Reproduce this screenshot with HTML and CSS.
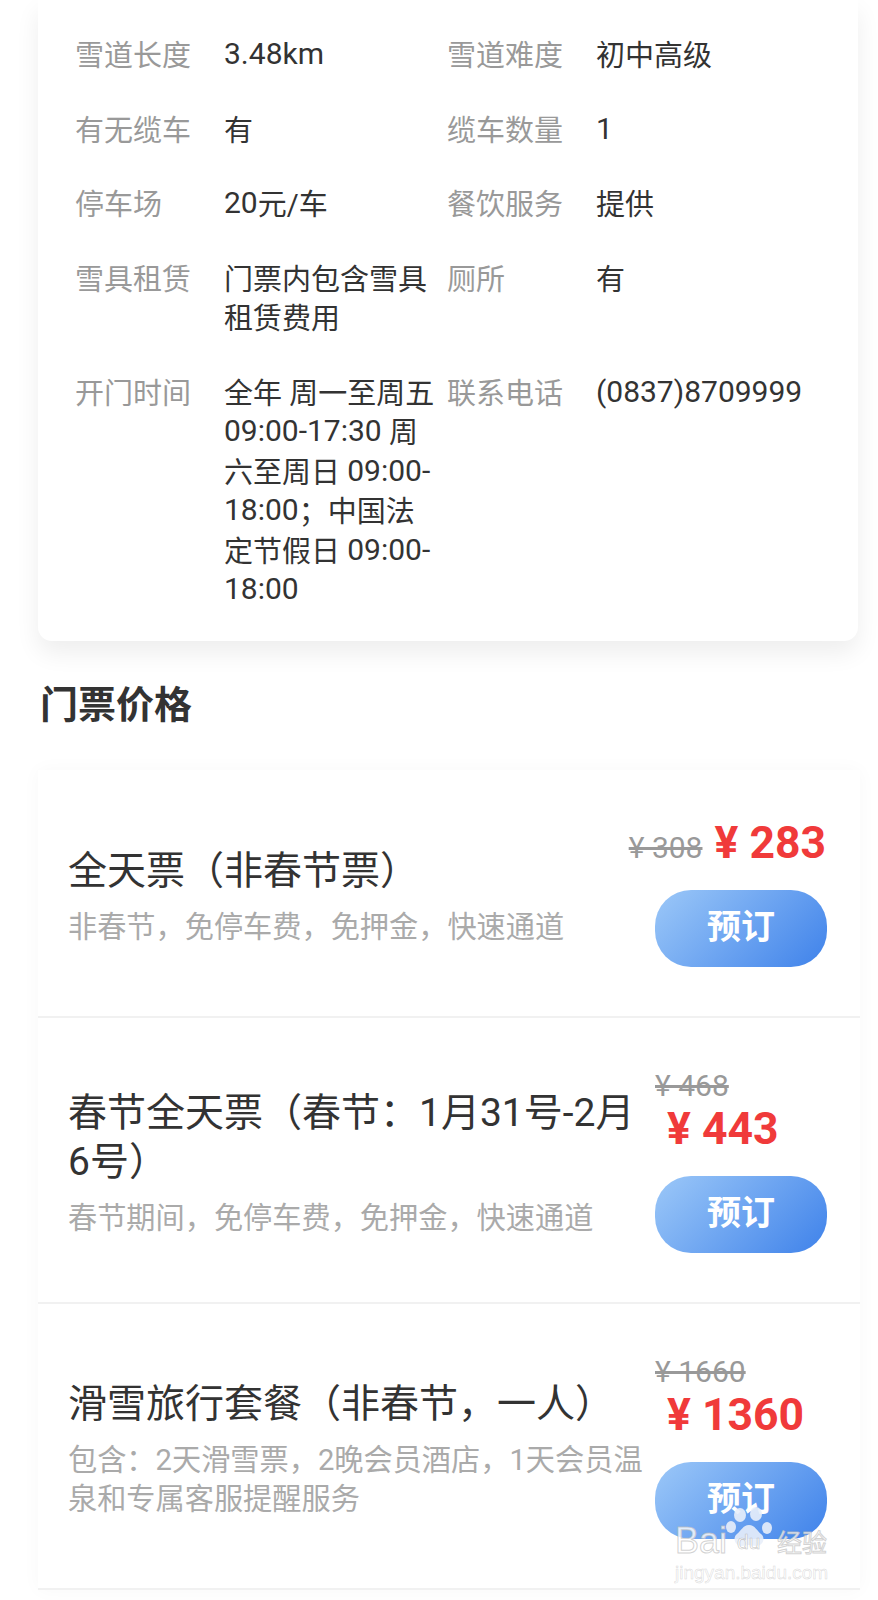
FILE: index.html
```html
<!DOCTYPE html>
<html lang="zh-CN">
<head>
    <meta charset="UTF-8">
    <meta name="viewport" content="width=device-width, initial-scale=1.0">
    <title>门票价格</title>
    <link rel="stylesheet" href="styles.css">
</head>
<body>
    <div class="info-card">
        <div class="info-row">
            <span class="info-label">雪道长度</span><span class="info-value"><span class="num">3.48km</span></span>
            <span class="info-label">雪道难度</span><span class="info-value">初中高级</span>
        </div>
        <div class="info-row">
            <span class="info-label">有无缆车</span><span class="info-value">有</span>
            <span class="info-label">缆车数量</span><span class="info-value"><span class="num">1</span></span>
        </div>
        <div class="info-row">
            <span class="info-label">停车场</span><span class="info-value"><span class="num">20</span>元/车</span>
            <span class="info-label">餐饮服务</span><span class="info-value">提供</span>
        </div>
        <div class="info-row">
            <span class="info-label">雪具租赁</span><span class="info-value">门票内包含雪具租赁费用</span>
            <span class="info-label">厕所</span><span class="info-value">有</span>
        </div>
        <div class="info-row">
            <span class="info-label">开门时间</span><span class="info-value">全年 周一至周五 <span class="num">09:00-17:30</span> 周六至周日 <span class="num">09:00-18:00</span>；中国法定节假日 <span class="num">09:00-18:00</span></span>
            <span class="info-label">联系电话</span><span class="info-value"><span class="num">(0837)8709999</span></span>
        </div>
    </div>

    <h2 class="section-title">门票价格</h2>

    <div class="ticket-list">
        <div class="ticket">
            <div class="ticket-info">
                <div class="ticket-name">全天票（非春节票）</div>
                <div class="ticket-desc">非春节，免停车费，免押金，快速通道</div>
            </div>
            <div class="ticket-buy">
                <div class="price-line">
                    <span class="old-price">¥ 308</span>
                    <span class="new-price">¥ 283</span>
                </div>
                <button class="book-btn">预订</button>
            </div>
        </div>
        <div class="ticket">
            <div class="ticket-info">
                <div class="ticket-name">春节全天票（春节：1月31号-2月6号）</div>
                <div class="ticket-desc">春节期间，免停车费，免押金，快速通道</div>
            </div>
            <div class="ticket-buy">
                <div class="price-stack">
                    <span class="old-price">¥ 468</span>
                    <span class="new-price">¥ 443</span>
                </div>
                <button class="book-btn">预订</button>
            </div>
        </div>
        <div class="ticket">
            <div class="ticket-info">
                <div class="ticket-name">滑雪旅行套餐（非春节，一人）</div>
                <div class="ticket-desc">包含：2天滑雪票，2晚会员酒店，1天会员温泉和专属客服提醒服务</div>
            </div>
            <div class="ticket-buy">
                <div class="price-stack">
                    <span class="old-price">¥ 1660</span>
                    <span class="new-price">¥ 1360</span>
                </div>
                <button class="book-btn">预订</button>
            </div>
        </div>
    </div>

    <!-- image watermark, sits over the last button -->
    <div class="watermark">
        <div class="wm-brand">
            <span>Bai</span>
            <span class="wm-paw">
                <svg width="46" height="44" viewBox="0 0 46 44">
                    <ellipse cx="14" cy="8" rx="6" ry="7"/>
                    <ellipse cx="30" cy="7" rx="6" ry="7"/>
                    <ellipse cx="5" cy="20" rx="5" ry="6"/>
                    <ellipse cx="41" cy="21" rx="5" ry="6"/>
                    <path d="M23 18c6 0 8 6 12 9 5 4 2 12-5 12-3 0-5-1-7-1s-4 1-7 1c-7 0-10-8-5-12 4-3 6-9 12-9z"/>
                </svg>
                <span class="wm-du">du</span>
            </span>
            <span class="wm-cn">经验</span>
        </div>
        <div class="wm-url">jingyan.baidu.com</div>
    </div>
</body>
</html>
```

FILE: styles.css
```css
body {
    position: relative;
    margin: 0;
    height: 1600px;
    overflow: hidden;
    background-color: #fff;
    font-family: Roboto, "Noto Sans CJK SC", sans-serif;
    color: #333;
}
.info-card {
    margin: 0 20px 0 38px;
    padding: 37px 0 0 37px;
    height: 604px;
    border-radius: 0 0 14px 14px;
    box-shadow: 0 12px 24px rgba(0, 0, 0, 0.07);
    font-size: 29px;
}
.info-row {
    display: grid;
    grid-template-columns: 149px 223px 149px 1fr;
    line-height: 39.5px;
    margin-bottom: 35px;
}
.info-label {
    color: #999;
}
.info-value {
    padding-right: 8px;
    color: #333;
}
.num {
    font-size: 30px;
    line-height: 1;
    vertical-align: 2px;
}
.section-title {
    margin: 40px 0 0 40px;
    font-size: 38px;
    line-height: 48px;
    font-weight: 700;
    color: #333;
}
.ticket-list {
    margin: 41px 18px 0 38px;
    box-shadow: 0 0 18px rgba(0, 0, 0, 0.03);
}
.ticket {
    display: flex;
    justify-content: space-between;
    align-items: center;
    padding: 0 33px 0 30px;
    border-bottom: 2px solid #f1f1f1;
}
.ticket-info {
    width: 580px;
    padding-top: 7px;
}
.ticket-name {
    font-size: 39px;
    line-height: 49px;
    color: #333;
}
.ticket-desc {
    margin-top: 12px;
    font-size: 29.2px;
    line-height: 39px;
    color: #aaa;
}
.ticket-buy {
    display: flex;
    flex-direction: column;
    align-items: flex-end;
    flex-shrink: 0;
    padding: 49px 0 49px;
}
.price-line {
    display: flex;
    align-items: baseline;
    gap: 12px;
    margin-right: 1px;
    white-space: nowrap;
}
.price-stack {
    display: flex;
    flex-direction: column;
    align-self: flex-start;
    white-space: nowrap;
}
.price-stack .new-price {
    margin-left: 12px;
}
.old-price {
    font-size: 30px;
    line-height: 38px;
    color: #999;
    text-decoration: line-through;
}
.new-price {
    font-size: 44.5px;
    line-height: 48px;
    font-weight: 700;
    color: #f03a3a;
}
.book-btn {
    width: 172px;
    height: 77px;
    margin-top: 23px;
    padding: 0 0 8px;
    border: none;
    border-radius: 36px;
    background: linear-gradient(135deg, #9cc8f8, #3f82ea);
    color: #fff;
    font-family: inherit;
    font-size: 34px;
    font-weight: 700;
}
.watermark {
    position: absolute;
    left: 675px;
    top: 1512px;
    color: rgba(255, 255, 255, 0.8);
    -webkit-text-stroke: 1px rgba(190, 190, 190, 0.7);
}
.wm-brand {
    display: flex;
    align-items: flex-end;
    height: 44px;
    font-family: "Liberation Sans", sans-serif;
    font-size: 36px;
    line-height: 30px;
    white-space: nowrap;
}
.wm-paw {
    position: relative;
    width: 46px;
    height: 44px;
    margin-left: -1px;
}
.wm-paw svg {
    position: absolute;
    left: 0;
    top: -5px;
    fill: rgba(232, 238, 250, 0.9);
}
.wm-du {
    position: absolute;
    left: 11px;
    bottom: 2px;
    font-size: 21px;
    line-height: 24px;
    -webkit-text-stroke: 0.6px rgba(170, 170, 170, 0.7);
}
.wm-cn {
    margin-left: 5px;
    font-family: "Noto Sans CJK SC", sans-serif;
    font-size: 25px;
}
.wm-url {
    margin-top: 6px;
    font-family: "Liberation Sans", sans-serif;
    font-size: 19px;
    line-height: 22px;
    -webkit-text-stroke: 0.5px rgba(190, 190, 190, 0.6);
    white-space: nowrap;
}
```
